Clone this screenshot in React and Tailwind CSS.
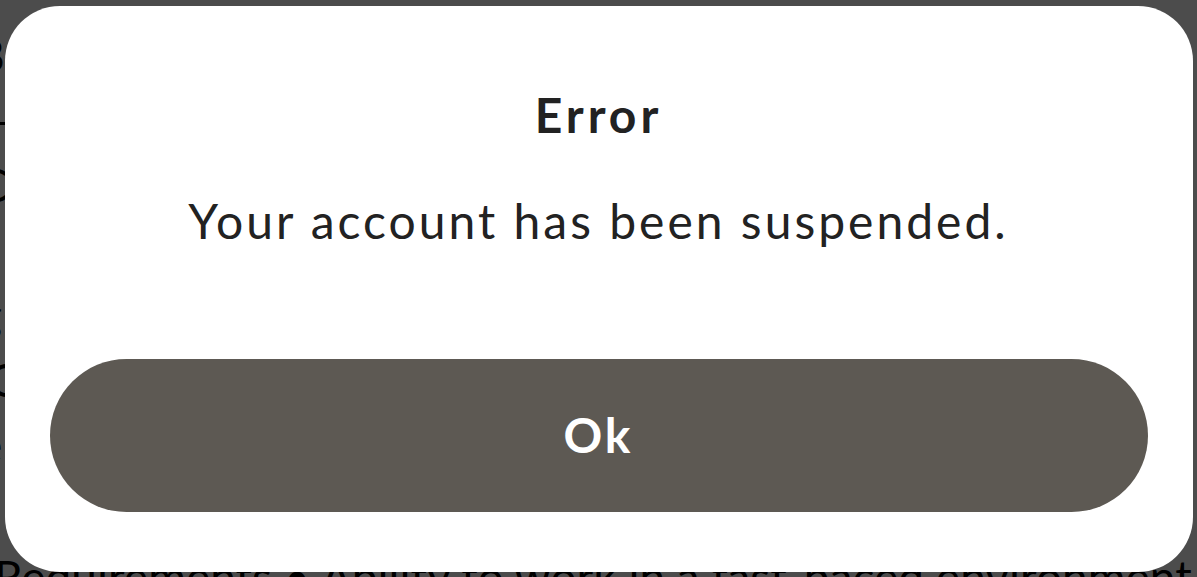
export default function App() {
  const bgLines = ["8 Senior", "— Full", "Company", "/ roles", "g design", "iOS apps", "e teams", "a groups"];
  return (
    <div
      className="relative w-[1197px] h-[577px] overflow-hidden bg-white text-black"
      style={{ fontFamily: "Lato, 'Noto Sans', sans-serif" }}
    >
      <div className="flex flex-col pt-[22px] -ml-[22px] text-[46px] leading-[65px]">
        {bgLines.map((l, i) => (
          <div key={i} className="whitespace-nowrap">{l}</div>
        ))}
        <div className="whitespace-nowrap mt-[2px] ml-[16px] text-[46px]">
          Requirements • Ability to work in a fast-paced environment
        </div>
      </div>
      <div className="absolute inset-0 bg-black/70 flex items-center justify-center">
        <div className="w-[1188px] h-[566px] rounded-[55px] bg-white flex flex-col items-center pt-[85px] px-[45px] pb-[60px] text-[#222222]">
          <div className="text-[48px] leading-[48px] font-bold tracking-[4px]">Error</div>
          <div className="mt-[58px] text-[48px] leading-[48px] tracking-[3px]">
            Your account has been suspended.
          </div>
          <button className="mt-[114px] w-full h-[153px] rounded-full bg-[#5d5953] text-white text-[48px] leading-[48px] font-bold tracking-[3px] flex items-center justify-center">
            Ok
          </button>
        </div>
      </div>
    </div>
  );
}
